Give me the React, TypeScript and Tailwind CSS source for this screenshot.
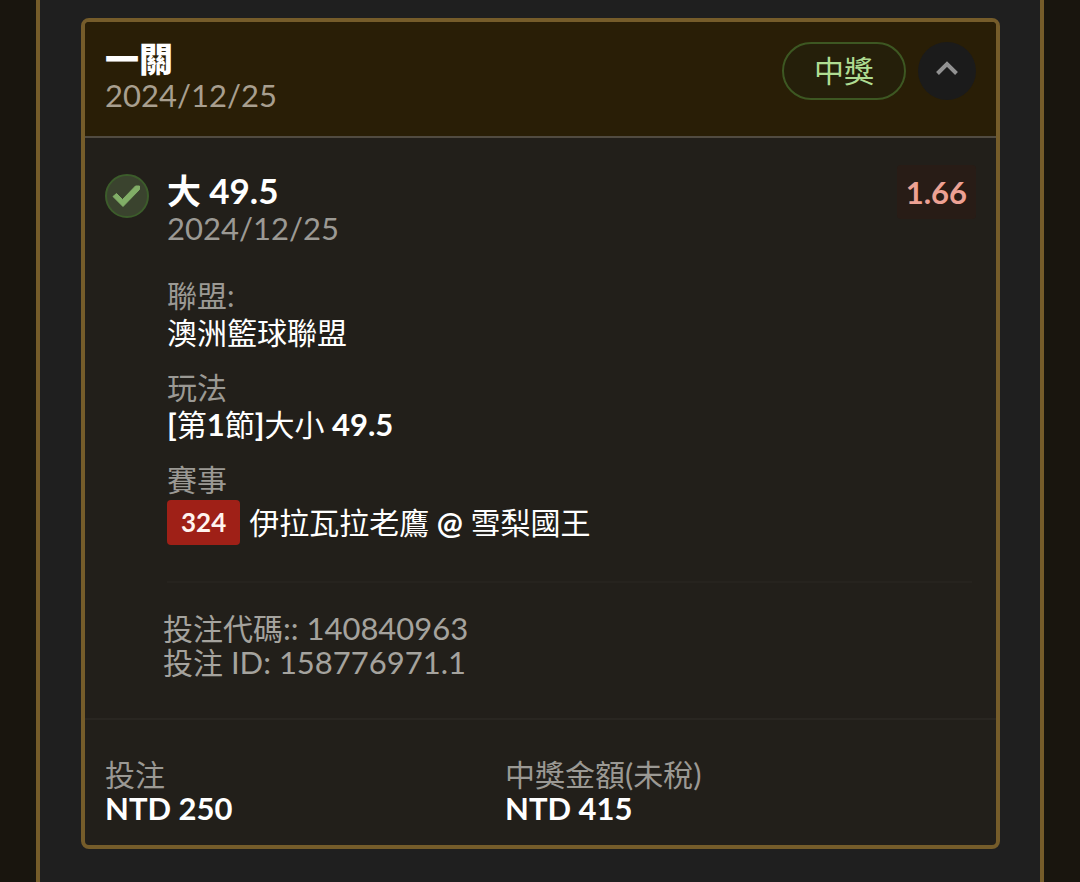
import { useState, type ReactNode } from "react";

function Latin({ children }: { children: ReactNode }) {
  return <span className="text-[31px]">{children}</span>;
}

function Strong({ children }: { children: ReactNode }) {
  return <span className="text-[31px] font-bold">{children}</span>;
}

function CheckBadge() {
  return (
    <svg viewBox="0 0 44 44" className="mt-[3px] size-11 shrink-0" role="img" aria-label="中獎">
      <circle cx="22" cy="22" r="21" fill="#3a432e" stroke="#3c5c2b" strokeWidth="2" />
      <path
        d="M8 22.5 L11.5 19.5 L17.5 25.5 L30.5 12 L34.5 12 L34.5 15.5 L18 32.5 Z"
        fill="#81ae67"
        stroke="#81ae67"
        strokeWidth="1"
        strokeLinejoin="round"
      />
    </svg>
  );
}

function Field({ label, children }: { label: ReactNode; children: ReactNode }) {
  return (
    <div>
      <dt className="text-[#9b9994]">{label}</dt>
      <dd className="text-white">{children}</dd>
    </div>
  );
}

export default function App() {
  const [open, setOpen] = useState(true);

  return (
    <div className="min-h-screen bg-[#19150e] px-9 font-['Lato','Noto_Sans_CJK_TC',sans-serif] text-[30px] leading-[37px]">
      <main className="min-h-screen border-x-4 border-[#755c2a] bg-[#1f1f1f] py-[18px] pr-10 pl-[41px]">
        <article className="overflow-hidden rounded-lg border-4 border-[#755c2a] bg-[#221f1a]">
          <header className="flex items-start justify-between border-b-2 border-[#514b41] bg-[#291e06] px-5 pt-5 pb-[22px]">
            <div>
              <h1 className="text-[34px] leading-[34px] font-black text-white">一關</h1>
              <p className="text-[31px] leading-[38px] text-[#a89f8f]">2024/12/25</p>
            </div>
            <div className="flex items-center gap-3">
              <span className="rounded-full border-2 border-[#3d5722] bg-[#251f0a] px-[30px] pt-[7px] pb-[9px] leading-[38px] text-[#afdc92]">
                中獎
              </span>
              <button
                type="button"
                aria-label="收合"
                aria-expanded={open}
                onClick={() => setOpen(!open)}
                className="flex size-[58px] items-center justify-center rounded-full bg-[#1b1b1b]"
              >
                <svg viewBox="0 0 24 24" className={open ? "size-6" : "size-6 rotate-180"} aria-hidden="true">
                  <path d="M2.5 14.5 L12 5 L21.5 14.5" fill="none" stroke="#929292" strokeWidth="4" />
                </svg>
              </button>
            </div>
          </header>

          {open && (
            <section className="flex gap-[18px] px-5 pt-[33px] pb-[39px]">
              <CheckBadge />
              <div className="min-w-0 flex-1">
                <div className="flex items-start justify-between">
                  <div>
                    <h2 className="text-[34px] leading-[38px] font-bold text-white">
                      大 <span className="text-[35px]">49.5</span>
                    </h2>
                    <p className="text-[31px] text-[#9b9994]">2024/12/25</p>
                  </div>
                  <strong className="-mt-1.5 rounded bg-[#281c16] px-[9px] text-[31px] leading-[54px] text-[#eda194]">
                    1.66
                  </strong>
                </div>

                <dl className="mt-[30px] flex flex-col gap-[18px]">
                  <Field label="聯盟:">澳洲籃球聯盟</Field>
                  <Field label="玩法">
                    <Strong>[</Strong>第<Strong>1</Strong>節<Strong>]</Strong>大小<Strong> 49.5</Strong>
                  </Field>
                  <Field label="賽事">
                    <span className="flex items-center gap-[9px] pt-0.5">
                      <span className="rounded bg-[#9f2017] px-3.5 text-[26px] leading-[45px] font-bold text-[#fff3ee]">
                        324
                      </span>
                      <span>
                        伊拉瓦拉老鷹<Strong> @ </Strong>雪梨國王
                      </span>
                    </span>
                  </Field>
                </dl>

                <hr className="mt-9 mr-1 mb-7 border-t-2 border-[#26231e]" />

                <div className="-ml-1 leading-[34px] text-[#a5a39e]">
                  <p>
                    投注代碼<Latin>:: 140840963</Latin>
                  </p>
                  <p>
                    投注<Latin> ID: 158776971.1</Latin>
                  </p>
                </div>
              </div>
            </section>
          )}

          <footer className="grid grid-cols-[400px_1fr] border-t-2 border-[#292621] px-5 pt-[37px] pb-5 leading-[34px]">
            <div>
              <p className="text-[#9b9994]">投注</p>
              <p className="text-[31px] font-bold text-white">NTD 250</p>
            </div>
            <div>
              <p className="text-[#9b9994]">
                中獎金額<Latin>(</Latin>未稅<Latin>)</Latin>
              </p>
              <p className="text-[31px] font-bold text-white">NTD 415</p>
            </div>
          </footer>
        </article>
      </main>
    </div>
  );
}
